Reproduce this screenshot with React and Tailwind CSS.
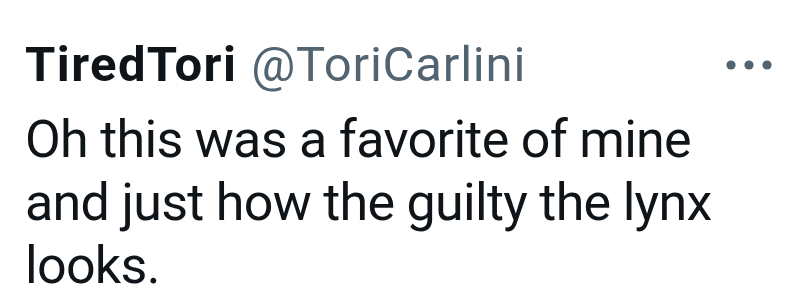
export default function App() {
  return (
    <div className="w-[800px] h-[308px] bg-white overflow-hidden" style={{ fontFamily: 'Roboto, "Noto Sans", sans-serif' }}>
      <div className="flex items-center justify-between pl-[25px] pr-[28px] pt-[35px] h-[95px]">
        <div className="flex items-baseline gap-[14px] text-[49px] leading-[60px] whitespace-nowrap">
          <span className="font-bold text-[#0f1419] tracking-[1.4px]">TiredTori</span>
          <span className="text-[#536471] tracking-[0.8px]">@ToriCarlini</span>
        </div>
        <svg width="46" height="12" viewBox="0 0 46 12">
          <circle cx="5" cy="6" r="4.6" fill="#536471" />
          <circle cx="23" cy="6" r="4.6" fill="#536471" />
          <circle cx="41" cy="6" r="4.6" fill="#536471" />
        </svg>
      </div>
      <p className="pl-[25px] pt-[13px] text-[52px] leading-[63px] tracking-[-0.7px] text-[#0f1419]">
        Oh this was a favorite of mine
        <br />
        and just how the guilty the lynx
        <br />
        looks.
      </p>
    </div>
  );
}
